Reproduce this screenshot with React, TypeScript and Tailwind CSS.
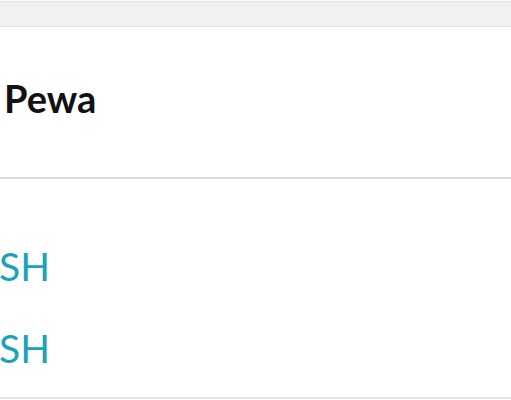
export default function App() {
  return (
    <div className="w-[511px] h-[400px] bg-white overflow-hidden font-['Lato',sans-serif]">
      {/* top bar */}
      <div className="h-[26px] mt-[1px] bg-[#f2f0f1] border-t border-b border-[#e3e1e2]" />

      {/* title */}
      <div className="h-[152px] pt-[52px] pl-[4px] border-b-2 border-[#dcdcdc]">
        <h1 className="text-[38px] font-bold text-[#111] leading-none">Pewa</h1>
      </div>

      {/* rows */}
      <div className="h-[218px] flex flex-col">
        <span className="mt-[68px] -ml-[1px] text-[39px] text-[#1ba3b8] leading-none">SH</span>
        <span className="mt-[43px] -ml-[1px] text-[39px] text-[#1ba3b8] leading-none">SH</span>
      </div>
      <div className="h-[2px] bg-[#e4e4e4]" />
    </div>
  );
}
